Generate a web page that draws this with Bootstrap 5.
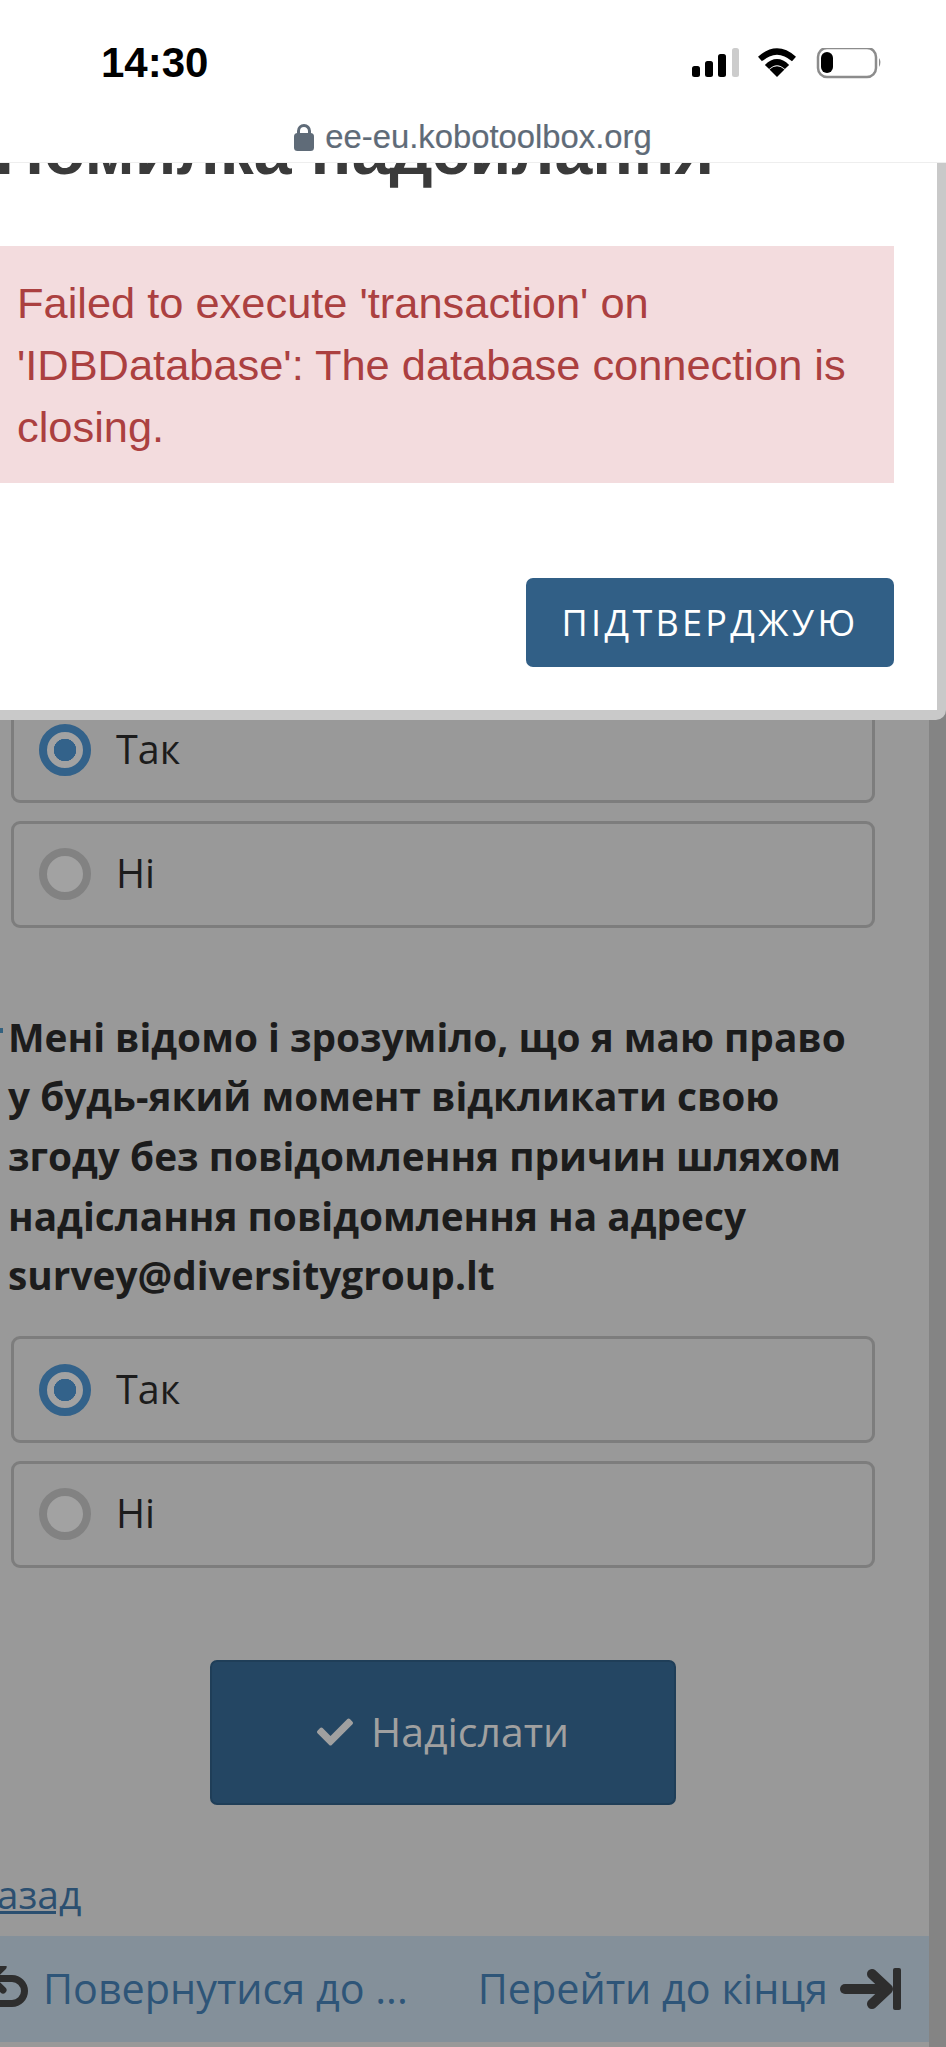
<!DOCTYPE html>
<html lang="uk">
<head>
<meta charset="utf-8">
<title>Помилка надсилання</title>
<link href="https://cdn.jsdelivr.net/npm/bootstrap@5.3.0/dist/css/bootstrap.min.css" rel="stylesheet">
<style>
html,body{height:2047px;overflow:hidden;}
body{width:946px;margin:0;background:#fff;font-family:"Open Sans",sans-serif;color:#1b1b1b;}
.ios-head{height:163px;background:#fff;border-bottom:1px solid #eeeeee;position:relative;z-index:3;}
.ios-row{height:120px;padding:48px 64px 0 101px;align-items:flex-start;}
.ios-time{font:700 42px/30px "Liberation Sans",sans-serif;color:#000;}
.ios-url{font:400 32.8px/34px "Liberation Sans",sans-serif;color:#5f6b78;gap:11px;-webkit-text-stroke:.2px #5f6b78;}
.shell{position:relative;height:1884px;background:#848484;}
.sheet{width:929px;height:1884px;background:#999999;padding:533px 54px 0 11px;}
.opt-card{height:107px;border:3px solid #7d7d7d;border-radius:9px;padding:0 0 0 25px;margin-bottom:17.5px;gap:25px;font-size:39.5px;color:#1c1c1c;}
.radio-dot{appearance:none;-webkit-appearance:none;width:52px;height:52px;margin:0;border-radius:50%;border:8px solid #828282;background:#a2a2a2;flex:none;}
.radio-dot:checked{border-color:#33628a;background:radial-gradient(circle,#33628a 0 11px,#a2a2a2 11.5px);}
.ask{font-size:38.8px;line-height:59.7px;font-weight:700;color:#1c1c1c;margin:80px 0 30px -3px;max-width:850px;position:relative;}
.ask-star{position:absolute;left:-8px;top:20px;width:3px;height:5px;background:#33617f;}
.send-btn{display:flex;align-items:center;justify-content:center;gap:18px;width:466px;height:145px;margin:92px auto 0;background:#244663;border:2px solid #1f3e58;border-radius:7px;color:#a0a0a0;font-size:41px;}
.back-link{display:block;margin:64px 0 0 -43px;font-size:39px;line-height:50px;color:#2b4f70;}
.foot-bar{position:absolute;left:0;bottom:5px;width:929px;height:106px;background:#84909a;padding:0 28px 0 0;font-size:41.3px;color:#2e5578;}
.foot-left{padding-left:43px;position:relative;}
.foot-undo{position:absolute;left:0;top:8px;}
.foot-go{gap:12px;}
.dialog-box{position:absolute;z-index:2;left:-50px;top:0;width:996px;height:557px;background:#fff;border:solid #c9c9c9;border-width:0 9px 10px 0;border-radius:0 0 10px 0;padding:0 43px 0 45px;}
.dialog-title{font:700 68px/80px "Liberation Sans",sans-serif;color:#3a3a3a;margin:-53px 0 0 0;white-space:nowrap;}
.alert.fail-note{margin:56px 0 0 0;border:0;border-radius:0;background:#f3dcde;color:#ab4040;padding:26px 40px 25px 22px;font:400 43.4px/62px "Liberation Sans",sans-serif;}
.btn.ok-btn{width:368px;height:89px;margin-top:95px;background:#315f86;border:0;border-radius:7px;color:#fff;font-size:36px;letter-spacing:3.3px;text-transform:uppercase;padding:0;}
</style>
</head>
<body>
<header class="ios-head">
  <div class="ios-row d-flex justify-content-between">
    <span class="ios-time">14:30</span>
    <svg width="190" height="32" viewBox="0 0 190 32" aria-hidden="true">
      <rect x="0" y="18" width="8" height="11" rx="2.5" fill="#000"/>
      <rect x="13" y="13" width="8" height="16" rx="2.5" fill="#000"/>
      <rect x="26" y="6" width="8" height="23" rx="2.5" fill="#000"/>
      <rect x="40" y="0" width="7" height="29" rx="2.5" fill="#cccccc"/>
      <g transform="translate(65 0)" fill="none" stroke="#000" stroke-width="6">
        <path d="M3 11Q20-4 37 11"/>
        <path d="M10 19Q20 9 30 19"/>
        <path d="M20 29L12.500 21.500Q20 15 27.500 21.500Z" fill="#000" stroke="none"/>
      </g>
      <rect x="126" y="0" width="58" height="29" rx="9" fill="none" stroke="#8c8c8c" stroke-width="2.500"/>
      <rect x="129" y="4" width="12" height="21" rx="6" fill="#000"/>
      <path d="M187 10q3 4 0 9z" fill="#8c8c8c"/>
    </svg>
  </div>
  <div class="ios-url d-flex justify-content-center align-items-center">
    <svg width="20" height="27" viewBox="0 0 20 27" aria-hidden="true">
      <rect x="0" y="9" width="20" height="18" rx="3.500" fill="#5f6b78"/>
      <path d="M4.500 10V7a5.500 5.500 0 0 1 11 0v3" fill="none" stroke="#5f6b78" stroke-width="3"/>
    </svg>
    <span>ee-eu.kobotoolbox.org</span>
  </div>
</header>

<div class="shell overflow-hidden">
  <main class="sheet">
    <label class="opt-card d-flex align-items-center"><input class="radio-dot" type="radio" name="q1" checked><span>Так</span></label>
    <label class="opt-card d-flex align-items-center"><input class="radio-dot" type="radio" name="q1"><span>Ні</span></label>

    <p class="ask"><span class="ask-star"></span>Мені відомо і зрозуміло, що я маю право у будь-який момент відкликати свою згоду без повідомлення причин шляхом надіслання повідомлення на адресу survey@diversitygroup.lt</p>

    <label class="opt-card d-flex align-items-center"><input class="radio-dot" type="radio" name="q2" checked><span>Так</span></label>
    <label class="opt-card d-flex align-items-center"><input class="radio-dot" type="radio" name="q2"><span>Ні</span></label>

    <button class="send-btn" type="button">
      <svg width="36" height="36" viewBox="0 0 512 512" aria-hidden="true"><path fill="#a0a0a0" d="M173.898 439.404l-166.4-166.4c-9.997-9.997-9.997-26.206 0-36.204l36.203-36.204c9.997-9.998 26.207-9.998 36.204 0L192 312.69 432.095 72.596c9.997-9.997 26.207-9.997 36.204 0l36.203 36.204c9.997 9.997 9.997 26.206 0 36.204l-294.4 294.401c-9.998 9.997-26.207 9.997-36.204-.001z"/></svg>
      <span>Надіслати</span>
    </button>
    <a class="back-link" href="#">Назад</a>
  </main>

  <nav class="foot-bar d-flex justify-content-between align-items-center">
    <span class="foot-left">
      <svg class="foot-undo" width="32" height="44" viewBox="0 0 32 44" aria-hidden="true"><g fill="none" stroke="#2e2e2e" stroke-width="7" stroke-linecap="round" stroke-linejoin="round"><path d="M-9 12.500H12a12.500 12.500 0 0 1 0 25H-9"/><path d="M-9 12.500L3 1M-9 12.500L3 24"/></g></svg>
      Повернутися до ...
    </span>
    <span class="foot-go d-flex align-items-center">
      <span>Перейти до кінця</span>
      <svg width="61" height="42" viewBox="0 0 61 42" aria-hidden="true"><g fill="none" stroke="#2e2e2e" stroke-width="10" stroke-linecap="round" stroke-linejoin="round"><path d="M5 21H47"/><path d="M32 6L48 21L32 36"/></g><rect x="53" y="0" width="8" height="42" rx="2" fill="#2e2e2e"/></svg>
    </span>
  </nav>

  <section class="dialog-box">
    <h1 class="dialog-title">Помилка надсилання</h1>
    <div class="alert alert-danger fail-note" role="alert">Failed to execute 'transaction' on 'IDBDatabase': The database connection is closing.</div>
    <div class="d-flex justify-content-end">
      <button class="btn ok-btn" type="button">Підтверджую</button>
    </div>
  </section>
</div>
<script src="https://cdn.jsdelivr.net/npm/bootstrap@5.3.0/dist/js/bootstrap.bundle.min.js"></script>
</body>
</html>
